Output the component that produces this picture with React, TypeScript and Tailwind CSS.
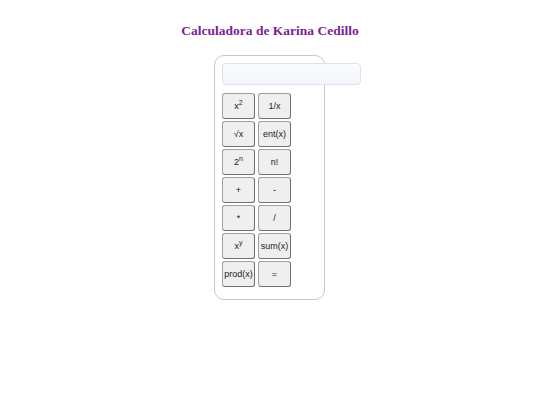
import React from "react";

const keys: React.ReactNode[][] = [
  [<>x<sup className="text-[7px]">2</sup></>, "1/x"],
  ["√x", "ent(x)"],
  [<>2<sup className="text-[7px]">n</sup></>, "n!"],
  ["+", "-"],
  ["*", "/"],
  [<>x<sup className="text-[7px]">y</sup></>, "sum(x)"],
  ["prod(x)", "="],
];

function Key({ children }: { children: React.ReactNode }) {
  return (
    <button className="w-[33px] h-[26px] bg-[#efefef] border border-[#a0a0a0] border-b-[#707070] border-r-[#707070] rounded-[3px] text-[9px] font-normal text-[#222] font-['Liberation_Sans',sans-serif] flex items-center justify-center leading-none">
      {children}
    </button>
  );
}

export default function App() {
  return (
    <div className="w-[540px] h-[405px] bg-white">
      <h1 className="pt-[23px] text-center text-[13.5px] leading-[15px] font-bold text-[#7a1f96] font-['Liberation_Serif',serif]">
        Calculadora de Karina Cedillo
      </h1>
      <div className="ml-[214px] mt-[17px] w-[111px] h-[245px] border border-[#c8c8c8] rounded-[10px] pt-[7px] pl-[7px]">
        <div className="w-[139px] h-[22px] border border-[#dde2ea] rounded-[4px] bg-gradient-to-b from-[#fafbfd] to-[#f2f5fa]" />
        <div className="mt-[8px] flex flex-col gap-[2px]">
          {keys.map((row, i) => (
            <div key={i} className="flex gap-[3px]">
              {row.map((k, j) => (
                <Key key={j}>{k}</Key>
              ))}
            </div>
          ))}
        </div>
      </div>
    </div>
  );
}
